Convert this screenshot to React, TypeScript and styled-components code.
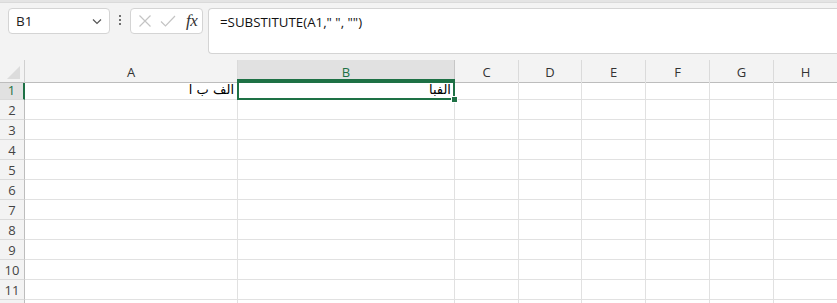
import React from "react";
import styled, { createGlobalStyle } from "styled-components";

const GlobalStyle = createGlobalStyle`
  html, body {
    margin: 0;
    padding: 0;
    background: #ffffff;
    overflow: hidden;
  }
  body {
    font-family: "Open Sans", "Noto Sans", sans-serif;
  }
`;

const GREEN = "#1e7145";
const GRID = "#e1e1e1";

const columns = [
  { key: "A", width: 213 },
  { key: "B", width: 217 },
  { key: "C", width: 64 },
  { key: "D", width: 63 },
  { key: "E", width: 64 },
  { key: "F", width: 64 },
  { key: "G", width: 64 },
  { key: "H", width: 64 },
];

// row 12 is only a few pixels tall on screen, so its label is left out
const rowCount = 12;
const visibleLabels = 11;

const cells: Record<string, string> = {
  A1: "الف ب ا",
  B1: "الفبا",
};

const selected = { col: "B", row: 1 };

const Page = styled.div`
  width: 837px;
  height: 303px;
  overflow: hidden;
  background: #ffffff;
`;

const TopStrip = styled.div`
  height: 2px;
  background: #e4e4e4;
  border-bottom: 1px solid #dadada;
`;

const FormulaBar = styled.div`
  display: flex;
  align-items: flex-start;
  height: 57px;
  padding: 5px 0 0 8px;
  box-sizing: border-box;
  background: #f3f3f3;
`;

const NameBox = styled.div`
  display: flex;
  align-items: center;
  justify-content: space-between;
  width: 102px;
  height: 26px;
  box-sizing: border-box;
  padding: 0 6px 0 7px;
  background: #ffffff;
  border: 1px solid #d4d4d4;
  border-radius: 4px;
  font-size: 13.5px;
  color: #222;
`;

const Dots = styled.div`
  display: flex;
  flex-direction: column;
  gap: 2px;
  width: 20px;
  align-items: center;
  padding-top: 7px;
  span {
    width: 2px;
    height: 2px;
    background: #444;
    border-radius: 1px;
  }
`;

const FxBox = styled.div`
  display: flex;
  align-items: center;
  gap: 8px;
  width: 73px;
  height: 26px;
  box-sizing: border-box;
  padding: 0 4px 0 7px;
  background: #ffffff;
  border: 1px solid #d4d4d4;
  border-radius: 4px;
`;

const FxText = styled.span`
  font-family: "Liberation Serif", "DejaVu Serif", serif;
  font-style: italic;
  font-size: 17px;
  color: #333;
  margin-left: 2px;
  letter-spacing: -0.5px;
`;

const FormulaInput = styled.div`
  flex: 1;
  height: 46px;
  margin-left: 5px;
  box-sizing: border-box;
  padding: 4px 11px;
  background: #ffffff;
  border: 1px solid #d4d4d4;
  border-right: none;
  border-radius: 4px 0 0 4px;
  font-family: "Open Sans", "Noto Sans", sans-serif;
  font-size: 13.3px;
  color: #111;
  white-space: pre;
`;

const Grid = styled.div`
  display: grid;
  grid-template-columns: 25px ${columns.map((c) => `${c.width}px`).join(" ")};
  grid-auto-rows: 20px;
`;

const Corner = styled.div`
  height: 23px;
  background: #f3f3f3;
  border-right: 1px solid #d0d0d0;
  border-bottom: 1px solid #bdbdbd;
  box-sizing: border-box;
  position: relative;
  &::after {
    content: "";
    position: absolute;
    right: 4px;
    bottom: 3px;
    width: 0;
    height: 0;
    border-left: 13px solid transparent;
    border-bottom: 13px solid #dcdcdc;
  }
`;

const ColHeader = styled.div<{ $active?: boolean }>`
  height: 23px;
  box-sizing: border-box;
  display: flex;
  align-items: center;
  justify-content: center;
  padding-top: 2px;
  font-size: 13px;
  background: ${(p) => (p.$active ? "#e1e1e1" : "#f3f3f3")};
  color: ${(p) => (p.$active ? GREEN : "#333")};
  border-right: 1px solid ${(p) => (p.$active ? "#c6c6c6" : "#dadada")};
  border-bottom: ${(p) => (p.$active ? `2px solid ${GREEN}` : "1px solid #bdbdbd")};
`;

const RowHeader = styled.div<{ $active?: boolean }>`
  box-sizing: border-box;
  display: flex;
  align-items: center;
  justify-content: center;
  font-size: 13px;
  background: ${(p) => (p.$active ? "#e1e1e1" : "#f3f3f3")};
  color: ${(p) => (p.$active ? GREEN : "#444")};
  border-right: ${(p) => (p.$active ? `2px solid ${GREEN}` : "1px solid #bdbdbd")};
  border-bottom: 1px solid #dadada;
`;

const Cell = styled.div<{ $selected?: boolean }>`
  position: relative;
  box-sizing: border-box;
  display: flex;
  align-items: center;
  justify-content: flex-end;
  padding: 0 3px;
  font-family: "DejaVu Sans", "Liberation Sans", sans-serif;
  font-size: 13px;
  color: #000;
  border-right: 1px solid ${GRID};
  border-bottom: 1px solid ${GRID};
  ${(p) =>
    p.$selected &&
    `
    z-index: 2;
    &::before {
      content: "";
      position: absolute;
      left: -1px;
      top: -1px;
      right: -1px;
      bottom: -1px;
      border: 2px solid ${GREEN};
      pointer-events: none;
    }
    &::after {
      content: "";
      position: absolute;
      right: -4px;
      bottom: -4px;
      width: 5px;
      height: 5px;
      background: ${GREEN};
      border: 1px solid #ffffff;
    }
  `}
`;

const CellText = styled.span`
  direction: rtl;
  white-space: nowrap;
  padding-bottom: 1px;
`;

const Chevron = () => (
  <svg width="12" height="12" viewBox="0 0 12 12">
    <path d="M2 4.5 L6 8.5 L10 4.5" fill="none" stroke="#555" strokeWidth="1.2" />
  </svg>
);

const CancelIcon = () => (
  <svg width="14" height="14" viewBox="0 0 14 14">
    <path d="M1.5 1.5 L12.5 12.5 M12.5 1.5 L1.5 12.5" stroke="#c4c4c4" strokeWidth="1.2" />
  </svg>
);

const CheckIcon = () => (
  <svg width="16" height="14" viewBox="0 0 16 14">
    <path d="M1 7.5 L5.5 12 L15 2" fill="none" stroke="#c4c4c4" strokeWidth="1.2" />
  </svg>
);

export default function App() {
  return (
    <Page>
      <GlobalStyle />
      <TopStrip />
      <FormulaBar>
        <NameBox>
          <span>B1</span>
          <Chevron />
        </NameBox>
        <Dots>
          <span />
          <span />
          <span />
        </Dots>
        <FxBox>
          <CancelIcon />
          <CheckIcon />
          <FxText>fx</FxText>
        </FxBox>
        <FormulaInput>{'=SUBSTITUTE(A1," ", "")'}</FormulaInput>
      </FormulaBar>
      <Grid>
        <Corner />
        {columns.map((c) => (
          <ColHeader key={c.key} $active={c.key === selected.col}>
            {c.key}
          </ColHeader>
        ))}
        {Array.from({ length: rowCount }, (_, i) => i + 1).map((r) => (
          <React.Fragment key={r}>
            <RowHeader $active={r === selected.row}>{r <= visibleLabels ? r : ""}</RowHeader>
            {columns.map((c) => {
              const id = `${c.key}${r}`;
              return (
                <Cell key={id} $selected={c.key === selected.col && r === selected.row}>
                  {cells[id] && <CellText>{cells[id]}</CellText>}
                </Cell>
              );
            })}
          </React.Fragment>
        ))}
      </Grid>
    </Page>
  );
}
